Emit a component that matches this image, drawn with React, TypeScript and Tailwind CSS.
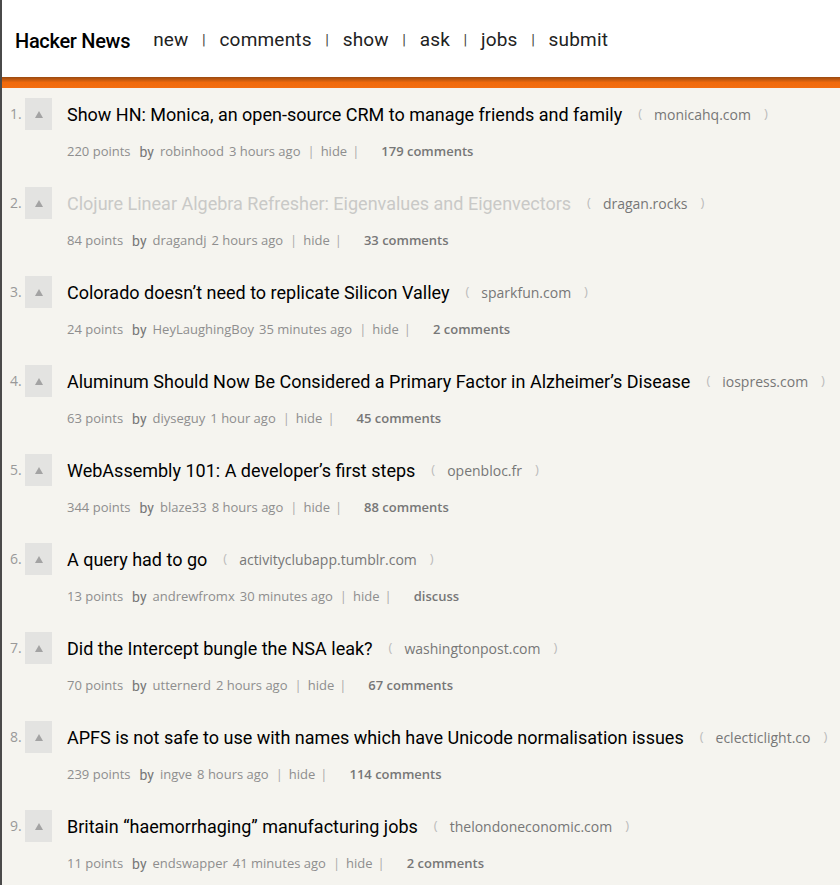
import React from "react";

type Story = {
  title: string;
  domain: string;
  points: number;
  user: string;
  age: string;
  comments: string;
  visited?: boolean;
};

const STORIES: Story[] = [
  { title: "Show HN: Monica, an open-source CRM to manage friends and family", domain: "monicahq.com", points: 220, user: "robinhood", age: "3 hours ago", comments: "179 comments" },
  { title: "Clojure Linear Algebra Refresher: Eigenvalues and Eigenvectors", domain: "dragan.rocks", points: 84, user: "dragandj", age: "2 hours ago", comments: "33 comments", visited: true },
  { title: "Colorado doesn’t need to replicate Silicon Valley", domain: "sparkfun.com", points: 24, user: "HeyLaughingBoy", age: "35 minutes ago", comments: "2 comments" },
  { title: "Aluminum Should Now Be Considered a Primary Factor in Alzheimer’s Disease", domain: "iospress.com", points: 63, user: "diyseguy", age: "1 hour ago", comments: "45 comments" },
  { title: "WebAssembly 101: A developer’s first steps", domain: "openbloc.fr", points: 344, user: "blaze33", age: "8 hours ago", comments: "88 comments" },
  { title: "A query had to go", domain: "activityclubapp.tumblr.com", points: 13, user: "andrewfromx", age: "30 minutes ago", comments: "discuss" },
  { title: "Did the Intercept bungle the NSA leak?", domain: "washingtonpost.com", points: 70, user: "utternerd", age: "2 hours ago", comments: "67 comments" },
  { title: "APFS is not safe to use with names which have Unicode normalisation issues", domain: "eclecticlight.co", points: 239, user: "ingve", age: "8 hours ago", comments: "114 comments" },
  { title: "Britain “haemorrhaging” manufacturing jobs", domain: "thelondoneconomic.com", points: 11, user: "endswapper", age: "41 minutes ago", comments: "2 comments" },
];

const NAV = ["new", "comments", "show", "ask", "jobs", "submit"];

const roboto = "font-['Roboto',sans-serif]";
const openSans = "font-['Open_Sans',sans-serif]";

function StoryRow({ s, rank }: { s: Story; rank: number }) {
  return (
    <div className="flex h-[89px] pt-[10px]">
      <span className={`${openSans} w-[23px] pl-[8px] pt-[6px] text-[14px] leading-[20px] text-[#999]`}>{rank}.</span>
      <div className="w-[27px] h-[32px] bg-[#e3e3e1] flex items-center justify-center">
        <svg width="8" height="7" viewBox="0 0 8 7"><path d="M4 0 L8 7 L0 7 Z" fill="#a3a3a3" /></svg>
      </div>
      <div className="ml-[15px] flex flex-col">
        <div className="flex items-center h-[32px] whitespace-nowrap">
          <span className={`${roboto} text-[18px] ${s.visited ? "text-[#c9c9c7]" : "text-black"}`}>{s.title}</span>
          <span className={`${openSans} ml-[16px] text-[13px] text-[#bbb]`}>(</span>
          <span className={`${openSans} ml-[12px] text-[14px] text-[#777]`}>{s.domain}</span>
          <span className={`${openSans} ml-[13px] text-[13px] text-[#bbb]`}>)</span>
        </div>
        <div className={`flex items-center mt-[12px] h-[20px] whitespace-nowrap text-[13px] text-[#8e8e8e] ${openSans}`}>
          <span>{s.points} points</span>
          <span className={`${roboto} ml-[9px] text-[14px] text-[#777]`}>by</span>
          <span className="ml-[6px]">{s.user}</span>
          <span className="ml-[5px]">{s.age}</span>
          <span className="ml-[7px] text-[#aaa]">|</span>
          <span className="ml-[6px]">hide</span>
          <span className="ml-[5px] text-[#aaa]">|</span>
          <span className="ml-[22px] font-semibold text-[#777]">{s.comments}</span>
        </div>
      </div>
    </div>
  );
}

export default function App() {
  return (
    <div className="min-h-[885px] bg-[#f5f4ef] border-l-2 border-[#4a4a4a]">
      <header className="h-[77px] bg-white flex items-center pl-[13px] pt-[4px]">
        <span className={`${roboto} font-medium text-[20px] text-black tracking-[-0.3px]`}>Hacker News</span>
        <nav className={`${roboto} ml-[23px] flex items-center text-[19px] tracking-[0.2px] text-[#222]`}>
          {NAV.map((n, i) => (
            <span key={n} className="flex items-center">
              {i > 0 && <span className="mx-[13.5px] text-[15px] text-[#444]">|</span>}
              <span>{n}</span>
            </span>
          ))}
        </nav>
      </header>
      <div className="h-[11px] bg-gradient-to-b from-[#9a4a10] via-[#f06a0c] to-[#f36d10]" />
      <main>
        {STORIES.map((s, i) => (
          <StoryRow key={i} s={s} rank={i + 1} />
        ))}
      </main>
    </div>
  );
}
